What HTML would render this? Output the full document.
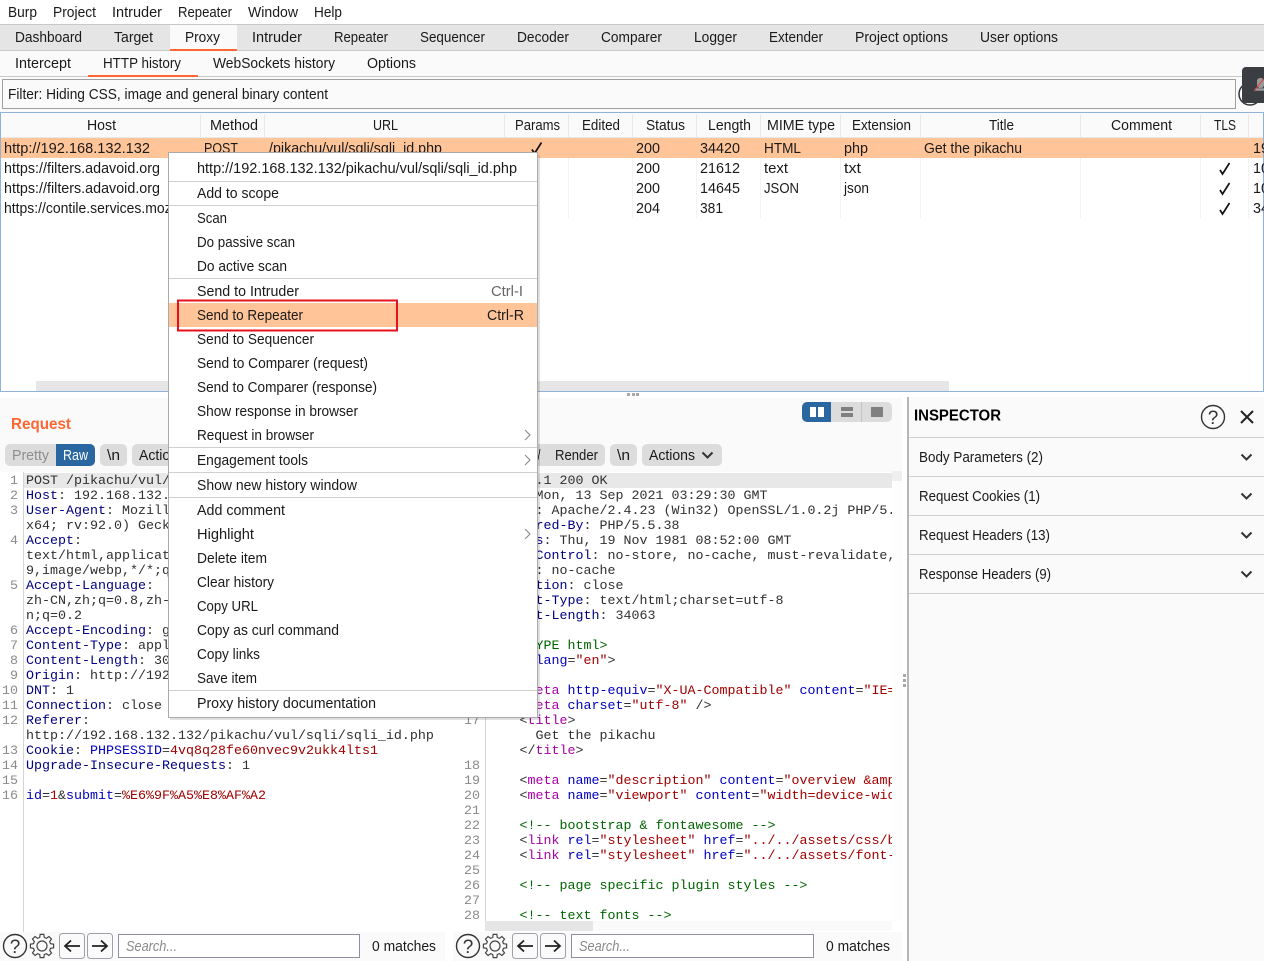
<!DOCTYPE html>
<html lang="en"><head><meta charset="utf-8"><title>Burp Suite</title>
<style>
html,body{margin:0;padding:0;background:#fff;width:1264px;height:961px;overflow:hidden}
svg{display:block}
text{font-family:"Liberation Sans",sans-serif;font-size:14.5px;fill:#1a1a1a;white-space:pre}
.m{font-family:"Liberation Mono",monospace;font-size:13.33px;fill:#303030}
.n{font-family:"Liberation Mono",monospace;font-size:13.33px;fill:#8a8a8a;text-anchor:end}
.h{fill:#000080}.b{fill:#0000c0}.r{fill:#a00000}.p{fill:#a800a8}.g{fill:#006400}
</style></head><body>
<svg width="1264" height="961" viewBox="0 0 1264 961" xmlns="http://www.w3.org/2000/svg">
<defs>
<clipPath id="cl"><rect x="24" y="472" width="430" height="450"/></clipPath>
<clipPath id="cr"><rect x="486" y="472" width="406" height="450"/></clipPath>
<clipPath id="ct"><rect x="0" y="113" width="1264" height="268"/></clipPath>
<g id="gear" fill="none" stroke="#444" stroke-width="1.2"><path transform="scale(.98)" d="M8.69-2.33 11.85-1.88 11.85 1.88 8.69 2.33 7.79 4.5 9.71 7.05 7.05 9.71 4.5 7.79 2.33 8.69 1.88 11.85-1.88 11.85-2.33 8.69-4.5 7.79-7.05 9.71-9.71 7.05-7.79 4.5-8.69 2.33-11.85 1.88-11.85-1.88-8.69-2.33-7.79-4.5-9.71-7.05-7.05-9.71-4.5-7.79-2.33-8.69-1.88-11.85 1.88-11.85 2.33-8.69 4.5-7.79 7.05-9.71 9.71-7.05 7.79-4.5Z"/><circle r="5"/></g>
<path id="chk" fill="none" stroke="#111" stroke-width="1.7" d="M-5 1.500-2.500 5.500 4.500-5.500"/>
<path id="chev" fill="none" stroke="#333" stroke-width="2" d="M-5-2.5 0 2.5 5-2.5"/>
<path id="more" fill="none" stroke="#8a8a8a" stroke-width="1.1" d="M-2-5 3 0-2 5"/>
</defs>

<!-- menu bar -->
<rect width="1264" height="24" fill="#fff"/>
<rect y="24" width="1264" height="1" fill="#c8c8c8"/>
<text x="8" y="17" textLength="29" lengthAdjust="spacingAndGlyphs">Burp</text>
<text x="53" y="17" textLength="43" lengthAdjust="spacingAndGlyphs">Project</text>
<text x="112" y="17" textLength="50" lengthAdjust="spacingAndGlyphs">Intruder</text>
<text x="178" y="17" textLength="54" lengthAdjust="spacingAndGlyphs">Repeater</text>
<text x="248" y="17" textLength="50" lengthAdjust="spacingAndGlyphs">Window</text>
<text x="314" y="17" textLength="28" lengthAdjust="spacingAndGlyphs">Help</text>

<!-- main tabs -->
<rect y="25" width="1264" height="25" fill="#e5e5e5"/>
<rect y="50" width="1264" height="1" fill="#c8cccc"/>
<rect x="170" y="25" width="67" height="25" fill="#fafafa"/>
<rect x="170" y="49" width="67" height="2" fill="#ff6633"/>
<text x="15" y="42" textLength="67" lengthAdjust="spacingAndGlyphs">Dashboard</text>
<text x="114" y="42" textLength="39" lengthAdjust="spacingAndGlyphs">Target</text>
<text x="185" y="42" textLength="35" lengthAdjust="spacingAndGlyphs">Proxy</text>
<text x="252" y="42" textLength="50" lengthAdjust="spacingAndGlyphs">Intruder</text>
<text x="334" y="42" textLength="54" lengthAdjust="spacingAndGlyphs">Repeater</text>
<text x="420" y="42" textLength="65" lengthAdjust="spacingAndGlyphs">Sequencer</text>
<text x="517" y="42" textLength="52" lengthAdjust="spacingAndGlyphs">Decoder</text>
<text x="601" y="42" textLength="61" lengthAdjust="spacingAndGlyphs">Comparer</text>
<text x="694" y="42" textLength="43" lengthAdjust="spacingAndGlyphs">Logger</text>
<text x="769" y="42" textLength="54" lengthAdjust="spacingAndGlyphs">Extender</text>
<text x="855" y="42" textLength="93" lengthAdjust="spacingAndGlyphs">Project options</text>
<text x="980" y="42" textLength="78" lengthAdjust="spacingAndGlyphs">User options</text>

<!-- sub tabs -->
<rect y="51" width="1264" height="25" fill="#fafafa"/>
<rect y="76" width="1264" height="1" fill="#c8c8c8"/>
<rect x="88" y="75" width="110" height="2" fill="#ff6633"/>
<text x="15" y="68" textLength="56" lengthAdjust="spacingAndGlyphs">Intercept</text>
<text x="103" y="68" textLength="78" lengthAdjust="spacingAndGlyphs">HTTP history</text>
<text x="213" y="68" textLength="122" lengthAdjust="spacingAndGlyphs">WebSockets history</text>
<text x="367" y="68" textLength="49" lengthAdjust="spacingAndGlyphs">Options</text>

<!-- filter -->
<rect y="77" width="1264" height="35" fill="#fafafa"/>
<rect x="2.5" y="79.5" width="1233" height="29" fill="#fafafa" stroke="#a0a0a0"/>
<text x="8" y="99" textLength="320" lengthAdjust="spacingAndGlyphs">Filter: Hiding CSS, image and general binary content</text>
<circle cx="1250" cy="94" r="11" fill="none" stroke="#333" stroke-width="1.5"/>

<!-- table -->
<rect x=".5" y="112.5" width="1263" height="279" fill="#fff" stroke="#8fb2d9"/>
<rect x="1" y="113" width="1262" height="24" fill="#fafafa"/>
<rect x="1" y="137" width="1262" height="1" fill="#e8e8e8"/>
<g fill="#e8e8e8"><rect x="200" y="114" width="1" height="23"/><rect x="264" y="114" width="1" height="23"/><rect x="504" y="114" width="1" height="23"/><rect x="568" y="114" width="1" height="23"/><rect x="632" y="114" width="1" height="23"/><rect x="696" y="114" width="1" height="23"/><rect x="760" y="114" width="1" height="23"/><rect x="840" y="114" width="1" height="23"/><rect x="920" y="114" width="1" height="23"/><rect x="1080" y="114" width="1" height="23"/><rect x="1200" y="114" width="1" height="23"/><rect x="1248" y="114" width="1" height="23"/></g>
<g fill="#f3f3f3"><rect x="200" y="158" width="1" height="60"/><rect x="264" y="158" width="1" height="60"/><rect x="504" y="158" width="1" height="60"/><rect x="568" y="158" width="1" height="60"/><rect x="632" y="158" width="1" height="60"/><rect x="696" y="158" width="1" height="60"/><rect x="760" y="158" width="1" height="60"/><rect x="840" y="158" width="1" height="60"/><rect x="920" y="158" width="1" height="60"/><rect x="1080" y="158" width="1" height="60"/><rect x="1200" y="158" width="1" height="60"/><rect x="1248" y="158" width="1" height="60"/></g>
<rect x="1" y="138" width="1262" height="20" fill="#ffc599"/>
<g>
<text x="87" y="130" textLength="29" lengthAdjust="spacingAndGlyphs">Host</text>
<text x="210" y="130" textLength="48" lengthAdjust="spacingAndGlyphs">Method</text>
<text x="373" y="130" textLength="25" lengthAdjust="spacingAndGlyphs">URL</text>
<text x="515" y="130" textLength="45" lengthAdjust="spacingAndGlyphs">Params</text>
<text x="582" y="130" textLength="38" lengthAdjust="spacingAndGlyphs">Edited</text>
<text x="646" y="130" textLength="39" lengthAdjust="spacingAndGlyphs">Status</text>
<text x="708" y="130" textLength="43" lengthAdjust="spacingAndGlyphs">Length</text>
<text x="767" y="130" textLength="68" lengthAdjust="spacingAndGlyphs">MIME type</text>
<text x="852" y="130" textLength="59" lengthAdjust="spacingAndGlyphs">Extension</text>
<text x="989" y="130" textLength="25" lengthAdjust="spacingAndGlyphs">Title</text>
<text x="1111" y="130" textLength="61" lengthAdjust="spacingAndGlyphs">Comment</text>
<text x="1214" y="130" textLength="22" lengthAdjust="spacingAndGlyphs">TLS</text>
</g>
<g clip-path="url(#ct)">
<text x="4" y="153" textLength="146" lengthAdjust="spacingAndGlyphs">http://192.168.132.132</text>
<text x="204" y="153" textLength="34" lengthAdjust="spacingAndGlyphs">POST</text>
<text x="269" y="153" textLength="173" lengthAdjust="spacingAndGlyphs">/pikachu/vul/sqli/sqli_id.php</text>
<use href="#chk" x="537" y="148"/>
<text x="636" y="153" textLength="24" lengthAdjust="spacingAndGlyphs">200</text>
<text x="700" y="153" textLength="40" lengthAdjust="spacingAndGlyphs">34420</text>
<text x="764" y="153" textLength="37" lengthAdjust="spacingAndGlyphs">HTML</text>
<text x="844" y="153" textLength="24" lengthAdjust="spacingAndGlyphs">php</text>
<text x="924" y="153" textLength="98" lengthAdjust="spacingAndGlyphs">Get the pikachu</text>
<text x="1253" y="153" textLength="16" lengthAdjust="spacingAndGlyphs">19</text>

<text x="4" y="173" textLength="156" lengthAdjust="spacingAndGlyphs">https://filters.adavoid.org</text>
<text x="636" y="173" textLength="24" lengthAdjust="spacingAndGlyphs">200</text>
<text x="700" y="173" textLength="40" lengthAdjust="spacingAndGlyphs">21612</text>
<text x="764" y="173" textLength="24" lengthAdjust="spacingAndGlyphs">text</text>
<text x="844" y="173" textLength="17" lengthAdjust="spacingAndGlyphs">txt</text>
<use href="#chk" x="1225" y="168.500"/>
<text x="1253" y="173" textLength="16" lengthAdjust="spacingAndGlyphs">10</text>

<text x="4" y="193" textLength="156" lengthAdjust="spacingAndGlyphs">https://filters.adavoid.org</text>
<text x="636" y="193" textLength="24" lengthAdjust="spacingAndGlyphs">200</text>
<text x="700" y="193" textLength="40" lengthAdjust="spacingAndGlyphs">14645</text>
<text x="764" y="193" textLength="35" lengthAdjust="spacingAndGlyphs">JSON</text>
<text x="844" y="193" textLength="25" lengthAdjust="spacingAndGlyphs">json</text>
<use href="#chk" x="1225" y="188.500"/>
<text x="1253" y="193" textLength="16" lengthAdjust="spacingAndGlyphs">10</text>

<text x="4" y="213" textLength="215" lengthAdjust="spacingAndGlyphs">https://contile.services.mozilla.com</text>
<text x="636" y="213" textLength="24" lengthAdjust="spacingAndGlyphs">204</text>
<text x="700" y="213" textLength="23" lengthAdjust="spacingAndGlyphs">381</text>
<use href="#chk" x="1225" y="208.500"/>
<text x="1253" y="213" textLength="16" lengthAdjust="spacingAndGlyphs">34</text>
</g>
<rect x="36" y="381" width="913" height="10" fill="#e6e6e6"/>

<!-- mic overlay -->
<rect x="1242" y="67" width="30" height="36" rx="4" fill="#3a3d42"/>
<rect x="1257" y="78" width="7" height="10" rx="3" fill="#9a9a9a"/>
<path d="M1255 89.500h9" stroke="#9a9a9a" stroke-width="2.500"/>
<path d="M1254 91 1263.500 79" stroke="#e0383c" stroke-width="1"/>

<!-- splitter -->
<g fill="#a8a8a8"><rect x="627" y="393" width="3" height="3"/><rect x="632" y="393" width="3" height="3"/><rect x="636" y="393" width="3" height="3"/></g>

<!-- panel backgrounds -->
<rect x="0" y="398" width="902" height="74" fill="#fafafa"/>
<text x="11" y="429" style="font-size:15.5px;font-weight:bold;fill:#ff6633" textLength="60" lengthAdjust="spacingAndGlyphs">Request</text>

<!-- request buttons -->
<path d="M10 444h46v22h-46a5 5 0 0 1-5-5v-12a5 5 0 0 1 5-5z" fill="#dcdcdc"/>
<path d="M56 444h34a5 5 0 0 1 5 5v12a5 5 0 0 1-5 5h-34z" fill="#2a67a0"/>
<text x="12" y="460" style="fill:#8e8e8e" textLength="37" lengthAdjust="spacingAndGlyphs">Pretty</text>
<text x="63" y="460" style="fill:#fff" textLength="25" lengthAdjust="spacingAndGlyphs">Raw</text>
<rect x="100" y="444" width="27" height="22" rx="5" fill="#dcdcdc"/>
<text x="107" y="460" textLength="13" lengthAdjust="spacingAndGlyphs">\n</text>
<rect x="132" y="444" width="80" height="22" rx="5" fill="#dcdcdc"/>
<text x="139" y="460" textLength="46" lengthAdjust="spacingAndGlyphs">Actions</text>

<!-- layout toggle -->
<path d="M807 402h24v20h-24a5 5 0 0 1-5-5v-10a5 5 0 0 1 5-5z" fill="#2a67a0"/>
<path d="M831 402h56a5 5 0 0 1 5 5v10a5 5 0 0 1-5 5h-56z" fill="#dcdcdc"/>
<rect x="861" y="402" width="1" height="20" fill="#c4c4c4"/>
<rect x="810" y="407" width="6" height="10" fill="#fff"/><rect x="818" y="407" width="6" height="10" fill="#fff"/>
<rect x="841" y="407" width="12" height="4" fill="#808080"/><rect x="841" y="413" width="12" height="4" fill="#808080"/>
<rect x="871" y="407" width="12" height="10" fill="#808080"/>

<!-- response buttons -->
<rect x="520" y="444" width="85" height="22" rx="5" fill="#dcdcdc"/>
<text x="555" y="460" textLength="43" lengthAdjust="spacingAndGlyphs">Render</text>
<text x="537.500" y="460" textLength="3" lengthAdjust="spacingAndGlyphs">/</text>
<rect x="610" y="444" width="27" height="22" rx="5" fill="#dcdcdc"/>
<text x="617" y="460" textLength="13" lengthAdjust="spacingAndGlyphs">\n</text>
<rect x="642" y="444" width="80" height="22" rx="5" fill="#dcdcdc"/>
<text x="649" y="460" textLength="46" lengthAdjust="spacingAndGlyphs">Actions</text>
<use href="#chev" x="707.5" y="455"/>

<!-- request editor -->
<rect x="23" y="472" width="1" height="460" fill="#d4d4d4"/>
<rect x="24" y="473" width="430" height="15" fill="#e8e8e8"/>
<g>
<text class="n" x="18" y="484">1</text><text class="n" x="18" y="499">2</text><text class="n" x="18" y="514">3</text><text class="n" x="18" y="544">4</text><text class="n" x="18" y="589">5</text><text class="n" x="18" y="634">6</text><text class="n" x="18" y="649">7</text><text class="n" x="18" y="664">8</text><text class="n" x="18" y="679">9</text><text class="n" x="18" y="694">10</text><text class="n" x="18" y="709">11</text><text class="n" x="18" y="724">12</text><text class="n" x="18" y="754">13</text><text class="n" x="18" y="769">14</text><text class="n" x="18" y="784">15</text><text class="n" x="18" y="799">16</text>
</g>
<g clip-path="url(#cl)">
<text class="m" x="26" y="484">POST /pikachu/vul/sqli/sqli_id.php HTTP/1.1</text>
<text class="m" x="26" y="499"><tspan class="h">Host</tspan>: 192.168.132.132</text>
<text class="m" x="26" y="514"><tspan class="h">User-Agent</tspan>: Mozilla/5.0 (Windows NT 10.0; Win64;</text>
<text class="m" x="26" y="529">x64; rv:92.0) Gecko/20100101 Firefox/92.0</text>
<text class="m" x="26" y="544"><tspan class="h">Accept</tspan>:</text>
<text class="m" x="26" y="559">text/html,application/xhtml+xml,application/xml;q=0.</text>
<text class="m" x="26" y="574">9,image/webp,*/*;q=0.8</text>
<text class="m" x="26" y="589"><tspan class="h">Accept-Language</tspan>:</text>
<text class="m" x="26" y="604">zh-CN,zh;q=0.8,zh-TW;q=0.7,zh-HK;q=0.5,en-US;q=0.3,e</text>
<text class="m" x="26" y="619">n;q=0.2</text>
<text class="m" x="26" y="634"><tspan class="h">Accept-Encoding</tspan>: gzip, deflate</text>
<text class="m" x="26" y="649"><tspan class="h">Content-Type</tspan>: application/x-www-form-urlencoded</text>
<text class="m" x="26" y="664"><tspan class="h">Content-Length</tspan>: 30</text>
<text class="m" x="26" y="679"><tspan class="h">Origin</tspan>: http://192.168.132.132</text>
<text class="m" x="26" y="694"><tspan class="h">DNT</tspan>: 1</text>
<text class="m" x="26" y="709"><tspan class="h">Connection</tspan>: close</text>
<text class="m" x="26" y="724"><tspan class="h">Referer</tspan>:</text>
<text class="m" x="26" y="739">http://192.168.132.132/pikachu/vul/sqli/sqli_id.php</text>
<text class="m" x="26" y="754"><tspan class="h">Cookie</tspan>: <tspan class="b">PHPSESSID</tspan>=<tspan class="r">4vq8q28fe60nvec9v2ukk4lts1</tspan></text>
<text class="m" x="26" y="769"><tspan class="h">Upgrade-Insecure-Requests</tspan>: 1</text>
<text class="m" x="26" y="799"><tspan class="b">id</tspan>=<tspan class="r">1</tspan>&amp;<tspan class="b">submit</tspan>=<tspan class="r">%E6%9F%A5%E8%AF%A2</tspan></text>
</g>

<!-- response editor -->
<rect x="485" y="472" width="1" height="450" fill="#d4d4d4"/>
<rect x="486" y="473" width="406" height="15" fill="#e8e8e8"/>
<rect x="892" y="471" width="10" height="10" fill="#efefef"/>
<rect x="892" y="481" width="10" height="440" fill="#fdfdfd"/>
<g>
<text class="n" x="480" y="724">17</text><text class="n" x="480" y="769">18</text><text class="n" x="480" y="784">19</text><text class="n" x="480" y="799">20</text><text class="n" x="480" y="814">21</text><text class="n" x="480" y="829">22</text><text class="n" x="480" y="844">23</text><text class="n" x="480" y="859">24</text><text class="n" x="480" y="874">25</text><text class="n" x="480" y="889">26</text><text class="n" x="480" y="904">27</text><text class="n" x="480" y="919">28</text>
</g>
<g clip-path="url(#cr)">
<text class="m" x="487.500" y="484">HTTP/1.1 200 OK</text>
<text class="m" x="487.500" y="499"><tspan class="h">Date</tspan>: Mon, 13 Sep 2021 03:29:30 GMT</text>
<text class="m" x="487.500" y="514"><tspan class="h">Server</tspan>: Apache/2.4.23 (Win32) OpenSSL/1.0.2j PHP/5.5.38</text>
<text class="m" x="487.500" y="529"><tspan class="h">X-Powered-By</tspan>: PHP/5.5.38</text>
<text class="m" x="487.500" y="544"><tspan class="h">Expires</tspan>: Thu, 19 Nov 1981 08:52:00 GMT</text>
<text class="m" x="487.500" y="559"><tspan class="h">Cache-Control</tspan>: no-store, no-cache, must-revalidate,</text>
<text class="m" x="487.500" y="574"><tspan class="h">Pragma</tspan>: no-cache</text>
<text class="m" x="487.500" y="589"><tspan class="h">Connection</tspan>: close</text>
<text class="m" x="487.500" y="604"><tspan class="h">Content-Type</tspan>: text/html;charset=utf-8</text>
<text class="m" x="487.500" y="619"><tspan class="h">Content-Length</tspan>: 34063</text>
<text class="m g" x="487.500" y="649">&lt;!DOCTYPE html&gt;</text>
<text class="m" x="487.500" y="664">&lt;<tspan class="p">html</tspan> <tspan class="b">lang</tspan>=<tspan class="r">"en"</tspan>&gt;</text>
<text class="m" x="487.500" y="679">&lt;<tspan class="p">head</tspan>&gt;</text>
<text class="m" x="519.500" y="694">&lt;<tspan class="p">meta</tspan> <tspan class="b">http-equiv</tspan>=<tspan class="r">"X-UA-Compatible"</tspan> <tspan class="b">content</tspan>=<tspan class="r">"IE=edge"</tspan> /&gt;</text>
<text class="m" x="519.500" y="709">&lt;<tspan class="p">meta</tspan> <tspan class="b">charset</tspan>=<tspan class="r">"utf-8"</tspan> /&gt;</text>
<text class="m" x="519.500" y="724">&lt;<tspan class="p">title</tspan>&gt;</text>
<text class="m" x="535.500" y="739">Get the pikachu</text>
<text class="m" x="519.500" y="754">&lt;/<tspan class="p">title</tspan>&gt;</text>
<text class="m" x="519.500" y="784">&lt;<tspan class="p">meta</tspan> <tspan class="b">name</tspan>=<tspan class="r">"description"</tspan> <tspan class="b">content</tspan>=<tspan class="r">"overview &amp;amp; stats"</tspan> /&gt;</text>
<text class="m" x="519.500" y="799">&lt;<tspan class="p">meta</tspan> <tspan class="b">name</tspan>=<tspan class="r">"viewport"</tspan> <tspan class="b">content</tspan>=<tspan class="r">"width=device-width"</tspan> /&gt;</text>
<text class="m g" x="519.500" y="829">&lt;!-- bootstrap &amp; fontawesome --&gt;</text>
<text class="m" x="519.500" y="844">&lt;<tspan class="p">link</tspan> <tspan class="b">rel</tspan>=<tspan class="r">"stylesheet"</tspan> <tspan class="b">href</tspan>=<tspan class="r">"../../assets/css/bootstrap.min.css"</tspan> /&gt;</text>
<text class="m" x="519.500" y="859">&lt;<tspan class="p">link</tspan> <tspan class="b">rel</tspan>=<tspan class="r">"stylesheet"</tspan> <tspan class="b">href</tspan>=<tspan class="r">"../../assets/font-awesome/css/"</tspan> /&gt;</text>
<text class="m g" x="519.500" y="889">&lt;!-- page specific plugin styles --&gt;</text>
<text class="m g" x="519.500" y="919">&lt;!-- text fonts --&gt;</text>
</g>
<rect x="486" y="921" width="406" height="10" fill="#fafafa"/>
<rect x="485" y="921" width="108" height="10" fill="#e5e5e5"/>

<!-- bottom bars -->
<rect x="0" y="932" width="445" height="29" fill="#fafafa"/>
<rect x="453" y="932" width="449" height="29" fill="#fafafa"/>
<circle cx="15" cy="946" r="11.500" fill="none" stroke="#333" stroke-width="1.4"/>
<text x="15" y="953" text-anchor="middle" style="font-size:19px;fill:#333">?</text>
<use href="#gear" x="42" y="946"/>
<rect x="59.5" y="933.5" width="25" height="25" rx="3" fill="#fafafa" stroke="#a0a0a8"/>
<path d="M65 946h15M71 940.500l-6 5.500 6 5.500" fill="none" stroke="#222" stroke-width="1.8"/>
<rect x="87.5" y="933.5" width="25" height="25" rx="3" fill="#fafafa" stroke="#a0a0a8"/>
<path d="M92 946h15M101 940.500l6 5.500-6 5.500" fill="none" stroke="#222" stroke-width="1.8"/>
<rect x="118.5" y="934.5" width="241" height="23" fill="#fff" stroke="#8f8fa0"/>
<text x="126" y="951" style="font-style:italic;fill:#8a8a8a" textLength="51" lengthAdjust="spacingAndGlyphs">Search...</text>
<text x="372" y="951" textLength="64" lengthAdjust="spacingAndGlyphs">0 matches</text>

<circle cx="468" cy="946" r="11.500" fill="none" stroke="#333" stroke-width="1.4"/>
<text x="468" y="953" text-anchor="middle" style="font-size:19px;fill:#333">?</text>
<use href="#gear" x="495" y="946"/>
<rect x="512.5" y="933.5" width="25" height="25" rx="3" fill="#fafafa" stroke="#a0a0a8"/>
<path d="M518 946h15M524 940.500l-6 5.500 6 5.500" fill="none" stroke="#222" stroke-width="1.8"/>
<rect x="540.5" y="933.5" width="25" height="25" rx="3" fill="#fafafa" stroke="#a0a0a8"/>
<path d="M545 946h15M554 940.500l6 5.500-6 5.500" fill="none" stroke="#222" stroke-width="1.8"/>
<rect x="571.5" y="934.5" width="242" height="23" fill="#fff" stroke="#8f8fa0"/>
<text x="579" y="951" style="font-style:italic;fill:#8a8a8a" textLength="51" lengthAdjust="spacingAndGlyphs">Search...</text>
<text x="826" y="951" textLength="64" lengthAdjust="spacingAndGlyphs">0 matches</text>

<!-- inspector -->
<rect x="902" y="397" width="5" height="564" fill="#fff"/>
<g fill="#a8a8a8"><rect x="903" y="674" width="3" height="3"/><rect x="903" y="679" width="3" height="3"/><rect x="903" y="684" width="3" height="3"/></g>
<rect x="907" y="397" width="2" height="564" fill="#b8b4b8"/>
<rect x="909" y="397" width="355" height="564" fill="#fafafa"/>
<text x="914" y="420.500" style="font-size:16px;font-weight:bold;fill:#000" textLength="87" lengthAdjust="spacingAndGlyphs">INSPECTOR</text>
<circle cx="1213" cy="417" r="11.5" fill="none" stroke="#333" stroke-width="1.4"/>
<text x="1213" y="424" text-anchor="middle" style="font-size:19px;fill:#333">?</text>
<path d="M1241 411 1253 423M1253 411 1241 423" stroke="#222" stroke-width="2" fill="none"/>
<g fill="#d0d0d0"><rect x="909" y="437" width="355" height="1"/><rect x="909" y="476" width="355" height="1"/><rect x="909" y="515" width="355" height="1"/><rect x="909" y="554" width="355" height="1"/><rect x="909" y="593" width="355" height="1"/></g>
<text x="919" y="462" textLength="124" lengthAdjust="spacingAndGlyphs">Body Parameters (2)</text>
<text x="919" y="501" textLength="121" lengthAdjust="spacingAndGlyphs">Request Cookies (1)</text>
<text x="919" y="540" textLength="131" lengthAdjust="spacingAndGlyphs">Request Headers (13)</text>
<text x="919" y="579" textLength="132" lengthAdjust="spacingAndGlyphs">Response Headers (9)</text>
<use href="#chev" x="1246.500" y="457"/><use href="#chev" x="1246.500" y="496"/><use href="#chev" x="1246.500" y="535"/><use href="#chev" x="1246.500" y="574"/>

<!-- context menu -->
<rect x="170" y="155" width="370" height="565" fill="#000" opacity=".12"/>
<rect x="168.500" y="152.500" width="369" height="565" fill="#fff" stroke="#aaa"/>
<g fill="#d0d0d0"><rect x="169" y="181" width="368" height="1"/><rect x="169" y="205" width="368" height="1"/><rect x="169" y="278" width="368" height="1"/><rect x="169" y="447" width="368" height="1"/><rect x="169" y="472" width="368" height="1"/><rect x="169" y="497" width="368" height="1"/><rect x="169" y="690" width="368" height="1"/></g>
<rect x="169" y="303" width="368" height="24" fill="#ffc599"/>
<text x="197" y="173" textLength="320" lengthAdjust="spacingAndGlyphs">http://192.168.132.132/pikachu/vul/sqli/sqli_id.php</text>
<text x="197" y="198" textLength="82" lengthAdjust="spacingAndGlyphs">Add to scope</text>
<text x="197" y="223" textLength="30" lengthAdjust="spacingAndGlyphs">Scan</text>
<text x="197" y="247" textLength="98" lengthAdjust="spacingAndGlyphs">Do passive scan</text>
<text x="197" y="271" textLength="90" lengthAdjust="spacingAndGlyphs">Do active scan</text>
<text x="197" y="296" textLength="102" lengthAdjust="spacingAndGlyphs">Send to Intruder</text>
<text x="491" y="296" style="fill:#666" textLength="32" lengthAdjust="spacingAndGlyphs">Ctrl-I</text>
<text x="197" y="320" textLength="106" lengthAdjust="spacingAndGlyphs">Send to Repeater</text>
<text x="487" y="320" textLength="37" lengthAdjust="spacingAndGlyphs">Ctrl-R</text>
<text x="197" y="344" textLength="117" lengthAdjust="spacingAndGlyphs">Send to Sequencer</text>
<text x="197" y="368" textLength="171" lengthAdjust="spacingAndGlyphs">Send to Comparer (request)</text>
<text x="197" y="392" textLength="180" lengthAdjust="spacingAndGlyphs">Send to Comparer (response)</text>
<text x="197" y="416" textLength="161" lengthAdjust="spacingAndGlyphs">Show response in browser</text>
<text x="197" y="440" textLength="117" lengthAdjust="spacingAndGlyphs">Request in browser</text>
<text x="197" y="465" textLength="111" lengthAdjust="spacingAndGlyphs">Engagement tools</text>
<text x="197" y="490" textLength="160" lengthAdjust="spacingAndGlyphs">Show new history window</text>
<text x="197" y="515" textLength="88" lengthAdjust="spacingAndGlyphs">Add comment</text>
<text x="197" y="539" textLength="57" lengthAdjust="spacingAndGlyphs">Highlight</text>
<text x="197" y="563" textLength="70" lengthAdjust="spacingAndGlyphs">Delete item</text>
<text x="197" y="587" textLength="77" lengthAdjust="spacingAndGlyphs">Clear history</text>
<text x="197" y="611" textLength="61" lengthAdjust="spacingAndGlyphs">Copy URL</text>
<text x="197" y="635" textLength="142" lengthAdjust="spacingAndGlyphs">Copy as curl command</text>
<text x="197" y="659" textLength="63" lengthAdjust="spacingAndGlyphs">Copy links</text>
<text x="197" y="683" textLength="60" lengthAdjust="spacingAndGlyphs">Save item</text>
<text x="197" y="708" textLength="179" lengthAdjust="spacingAndGlyphs">Proxy history documentation</text>
<use href="#more" x="527" y="435"/><use href="#more" x="527" y="460"/><use href="#more" x="527" y="534"/>
<rect x="178" y="300.500" width="219" height="30" fill="none" stroke="#e8101a" stroke-width="2"/>
</svg>
</body></html>
